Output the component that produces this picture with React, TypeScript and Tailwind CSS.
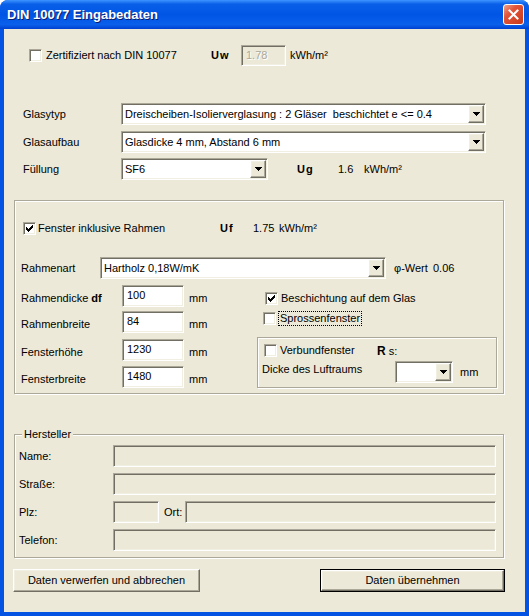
import React from "react";

const sunken =
  "border border-t-[#aca899] border-l-[#aca899] border-b-white border-r-white shadow-[inset_1px_1px_0_#716f64,inset_-1px_-1px_0_#f1efe2]";
const raised =
  "border border-t-white border-l-white border-b-[#716f64] border-r-[#716f64] shadow-[inset_-1px_-1px_0_#aca899,inset_1px_1px_0_#f1efe2]";
const etched = "border border-[#aca899] shadow-[inset_1px_1px_0_#fff,1px_1px_0_#fff]";

const checkRows = [[6, 1], [5, 2], [0, 1, 4, 3], [0, 2, 3, 3], [0, 5], [1, 3], [2, 1]];

function Check({ checked }: { checked?: boolean }) {
  return (
    <span className={`${sunken} flex h-[13px] w-[13px] shrink-0 items-center justify-center bg-white`}>
      {checked && (
        <svg width="7" height="7" viewBox="0 0 7 7" shapeRendering="crispEdges">
          {checkRows.map((r, y) => (
            <g key={y}>
              <rect x={r[0]} y={y} width={r[1]} height={1} fill="#000" />
              {r.length > 2 && <rect x={r[2]} y={y} width={r[3]} height={1} fill="#000" />}
            </g>
          ))}
        </svg>
      )}
    </span>
  );
}

function Arrow() {
  return (
    <span className={`${raised} flex w-[16px] shrink-0 items-center justify-center bg-[#ece9d8]`}>
      <svg width="7" height="4" viewBox="0 0 7 4" shapeRendering="crispEdges">
        <path d="M0 0h7v1h-1v1h-1v1h-1v1h-1v-1h-1v-1h-1v-1h-1z" fill="#000" />
      </svg>
    </span>
  );
}

function Combo({ w, text }: { w: string; text?: string }) {
  return (
    <div className={`${sunken} ${w} flex h-[22px] shrink-0 bg-white p-[1px]`}>
      <span className="flex-1 overflow-hidden whitespace-pre pl-[2px] pt-[1px] leading-[16px]">{text}</span>
      <Arrow />
    </div>
  );
}

function Field({ w, value, h = "h-[22px]" }: { w: string; value?: string; h?: string }) {
  return (
    <div className={`${sunken} ${w} ${h} shrink-0 bg-white pl-[4px] pt-[2px] leading-[14px]`}>{value}</div>
  );
}

function Flat({ w }: { w: string }) {
  return <div className={`${sunken} ${w} h-[22px] shrink-0 bg-[#ece9d8]`} />;
}

function Btn({ w, children, def }: { w: string; children: React.ReactNode; def?: boolean }) {
  const inner = (
    <div className={`${raised} flex h-full w-full items-center justify-center bg-[#ece9d8]`}>{children}</div>
  );
  return def ? (
    <div className={`${w} h-[23px] shrink-0 border border-black`}>{inner}</div>
  ) : (
    <div className={`${w} h-[23px] shrink-0`}>{inner}</div>
  );
}

export default function App() {
  return (
    <div className="flex h-[616px] w-[529px] flex-col rounded-t-[8px] bg-[#0553e3] font-['Liberation_Sans',Arial,sans-serif] text-[11px] text-black">
      {/* title bar */}
      <div className="flex h-[29px] shrink-0 items-center rounded-t-[8px] bg-[linear-gradient(180deg,#3d95ff_0%,#0a5fe8_14%,#0055e5_50%,#0a60ea_85%,#0040d0_100%)] pl-[7px] pr-[5px]">
        <span className="flex-1 text-[13px] font-bold text-white [text-shadow:1px_1px_0_#0a1e6e]">DIN 10077 Eingabedaten</span>
        <span className="flex h-[21px] w-[21px] items-center justify-center rounded-[3px] border border-white bg-[linear-gradient(135deg,#f0a48c_0%,#e2553a_35%,#c8381a_100%)]">
          <svg width="11" height="11" viewBox="0 0 11 11">
            <path d="M1.5 1.5l8 8M9.5 1.5l-8 8" stroke="#fff" strokeWidth="2" strokeLinecap="square" />
          </svg>
        </span>
      </div>

      {/* client */}
      <div className="mx-[4px] mb-[4px] flex flex-1 flex-col bg-[#ece9d8]">
        {/* Zertifiziert */}
        <div className="mt-[16px] flex h-[21px] items-center">
          <div className="ml-[25px] flex w-[182px] items-center">
            <Check />
            <span className="ml-[4px]">Zertifiziert nach DIN 10077</span>
          </div>
          <span className="w-[30px] font-bold tracking-[1px]">Uw</span>
          <div className={`${sunken} h-[21px] w-[45px] bg-[#ece9d8] pl-[4px] pt-[2px] leading-[14px] text-[#aca899] [text-shadow:1px_1px_0_#fff]`}>
            1.78
          </div>
          <span className="ml-[4px]">kWh/m²</span>
        </div>

        {/* Glas rows */}
        <div className="mt-[37px] flex h-[22px] items-center pl-[19px]">
          <span className="w-[98px]">Glasytyp</span>
          <Combo w="w-[365px]" text="Dreischeiben-Isolierverglasung : 2 Gläser  beschichtet e <= 0.4" />
        </div>
        <div className="mt-[6px] flex h-[22px] items-center pl-[19px]">
          <span className="w-[98px]">Glasaufbau</span>
          <Combo w="w-[365px]" text="Glasdicke 4 mm, Abstand 6 mm" />
        </div>
        <div className="mt-[5px] flex h-[22px] items-center pl-[19px]">
          <span className="w-[98px]">Füllung</span>
          <Combo w="w-[147px]" text="SF6" />
          <span className="ml-[29px] w-[41px] font-bold tracking-[1px]">Ug</span>
          <span className="w-[26px]">1.6</span>
          <span>kWh/m²</span>
        </div>

        {/* Fenster group */}
        <div className={`${etched} ml-[10px] mt-[20px] flex h-[194px] w-[490px] flex-col`}>
          <div className="mt-[21px] flex h-[13px] items-center">
            <div className="ml-[8px] flex w-[197px] items-center">
              <Check checked />
              <span className="ml-[2px]">Fenster inklusive Rahmen</span>
            </div>
            <span className="w-[33px] font-bold tracking-[1px]">Uf</span>
            <span className="w-[26px]">1.75</span>
            <span>kWh/m²</span>
          </div>

          <div className="mt-[22px] flex h-[22px] items-center pl-[6px]">
            <span className="w-[79px]">Rahmenart</span>
            <Combo w="w-[286px]" text="Hartholz 0,18W/mK" />
            <span className="ml-[8px] w-[39px]">φ-Wert</span>
            <span>0.06</span>
          </div>

          <div className="mt-[6px] flex">
            <div className="flex w-[242px] flex-col">
              {[
                { l: "Rahmendicke", b: "df", v: "100", mt: "mt-0" },
                { l: "Rahmenbreite", v: "84", mt: "mt-[4px]" },
                { l: "Fensterhöhe", v: "1230", mt: "mt-[6px]" },
                { l: "Fensterbreite", v: "1480", mt: "mt-[5px]" },
              ].map((r) => (
                <div key={r.l} className={`${r.mt} flex h-[22px] items-center pl-[6px]`}>
                  <span className="mt-[4px] w-[101px]">
                    {r.l} {r.b && <b>{r.b}</b>}
                  </span>
                  <Field w="w-[62px]" value={r.v} />
                  <span className="ml-[5px] mt-[4px]">mm</span>
                </div>
              ))}
            </div>

            <div className="flex flex-1 flex-col">
              <div className="mt-[7px] flex h-[13px] items-center">
                <span className="ml-[8px]">
                  <Check checked />
                </span>
                <span className="ml-[1px] border border-transparent px-[1px] leading-[13px]">Beschichtung auf dem Glas</span>
              </div>
              <div className="mt-[7px] flex h-[13px] items-center">
                <span className="ml-[6px]">
                  <Check />
                </span>
                <span className="ml-[2px] border border-dotted border-black px-[1px] leading-[13px]">Sprossenfenster</span>
              </div>

              <div className={`${etched} mt-[12px] flex h-[51px] w-[240px] flex-col`}>
                <div className="mt-[6px] flex h-[13px] items-center">
                  <div className="ml-[6px] flex w-[113px] items-center">
                    <Check />
                    <span className="ml-[3px]">Verbundfenster</span>
                  </div>
                  <span>
                    <b className="text-[12px]">R</b> s:
                  </span>
                </div>
                <div className="mt-[4px] flex h-[22px] items-center">
                  <span className="ml-[4px] w-[133px] -mt-[6px]">Dicke des Luftraums</span>
                  <Combo w="w-[58px]" />
                  <span className="ml-[7px]">mm</span>
                </div>
              </div>
            </div>
          </div>
        </div>

        {/* Hersteller group */}
        <div className={`${etched} relative ml-[10px] mt-[40px] flex h-[124px] w-[490px] flex-col`}>
          <span className="absolute left-[7px] top-[-8px] bg-[#ece9d8] px-[2px] leading-[14px]">Hersteller</span>
          <div className="mt-[10px] flex h-[22px] items-center">
            <span className="w-[98px] pl-[4px]">Name:</span>
            <Flat w="w-[383px]" />
          </div>
          <div className="mt-[6px] flex h-[22px] items-center">
            <span className="w-[98px] pl-[4px]">Straße:</span>
            <Flat w="w-[383px]" />
          </div>
          <div className="mt-[6px] flex h-[22px] items-center">
            <span className="w-[98px] pl-[4px]">Plz:</span>
            <Flat w="w-[46px]" />
            <span className="ml-[5px] w-[21px]">Ort:</span>
            <Flat w="w-[311px]" />
          </div>
          <div className="mt-[6px] flex h-[22px] items-center">
            <span className="w-[98px] pl-[4px]">Telefon:</span>
            <Flat w="w-[383px]" />
          </div>
        </div>

        {/* buttons */}
        <div className="mt-[11px] flex">
          <div className="ml-[9px]">
            <Btn w="w-[187px]">Daten verwerfen und abbrechen</Btn>
          </div>
          <div className="ml-[120px]">
            <Btn w="w-[185px]" def>
              Daten übernehmen
            </Btn>
          </div>
        </div>
      </div>
    </div>
  );
}
